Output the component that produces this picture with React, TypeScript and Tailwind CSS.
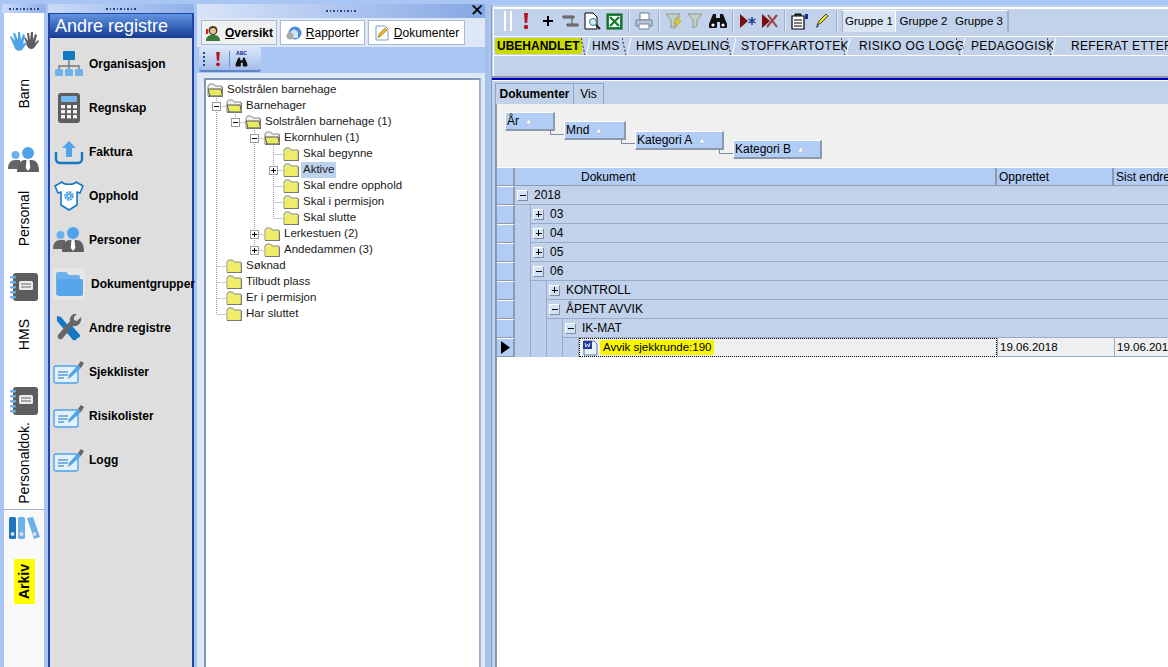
import React from "react";

const Org = () => (
  <svg width="30" height="28" viewBox="0 0 30 28">
    <rect x="9" y="1" width="12" height="9" rx="1" fill="#1578c2" />
    <path d="M15 10v6M5 20v-4h20v4M15 16v4" stroke="#777" strokeWidth="1.4" fill="none" />
    <rect x="1" y="19" width="8" height="7" rx="1.5" fill="#6db1ea" />
    <rect x="11" y="19" width="8" height="7" rx="1.5" fill="#6db1ea" />
    <rect x="21" y="19" width="8" height="7" rx="1.5" fill="#6db1ea" />
  </svg>
);
const Calc = () => (
  <svg width="24" height="32" viewBox="0 0 24 32">
    <rect x="1" y="1" width="22" height="30" rx="3" fill="#5d5d5d" />
    <rect x="4" y="4" width="16" height="6" rx="1" fill="#78b8ee" />
    {[13, 18, 23].map((y) =>
      [4, 10, 16].map((x) => <rect key={`${x}${y}`} x={x} y={y} width="4" height="3.4" fill="#f2f2f2" />)
    )}
  </svg>
);
const Upload = () => (
  <svg width="30" height="26" viewBox="0 0 30 26">
    <path d="M2 13v7a4 4 0 0 0 4 4h18a4 4 0 0 0 4-4v-7" fill="none" stroke="#1578c2" strokeWidth="2.4" />
    <path d="M15 2l7 7h-4v9h-6V9H8z" fill="#4ea3ea" />
  </svg>
);
const Body = () => (
  <svg width="30" height="30" viewBox="0 0 30 30">
    <path d="M8 1c2 3 12 3 14 0l7 4-3 7-3-1v13l-8 5-8-5V11l-3 1-3-7z" fill="#fff" stroke="#1578c2" strokeWidth="1.6" strokeLinejoin="round" />
    <circle cx="15" cy="15" r="3.6" fill="none" stroke="#4ea3ea" strokeWidth="2.6" strokeDasharray="2 .8" />
    <circle cx="15" cy="15" r="2.4" fill="#4ea3ea" />
    <circle cx="15" cy="15" r="1.1" fill="#fff" />
  </svg>
);
const People = () => (
  <svg width="32" height="26" viewBox="0 0 32 26">
    <circle cx="7.5" cy="8" r="4" fill="#6db1ea" />
    <path d="M0 22c0-6 3-9 7-9h5v9z" fill="#666" />
    <circle cx="20" cy="6" r="6" fill="#4ea3ea" />
    <path d="M9 25c0-9 4-12 8-12h6c5 0 8 3 8 12z" fill="#5f5f5f" />
    <path d="M18.5 13h3l.8 8-2.3 3-2.3-3z" fill="#fff" />
  </svg>
);
const BlueFolder = () => (
  <div className="w-[32px] h-[32px] bg-[#e6e6e6] flex items-center justify-center">
    <svg width="30" height="26" viewBox="0 0 30 26">
      <path d="M2 24V3a2 2 0 0 1 2-2h8l3 3h9a2 2 0 0 1 2 2v3H8v15z" fill="#6db1ea" />
      <rect x="3" y="8" width="26" height="17" rx="2" fill="#55a6ea" />
    </svg>
  </div>
);
const Tools = () => (
  <svg width="30" height="28" viewBox="0 0 30 28">
    <path d="M3 2l4 1 16 19a3 3 0 0 1-4 4L3 7z" fill="#1578c2" />
    <path d="M27 3l-4 4-3-1 0-3 3-3c-4-1-8 2-7 7L4 21a3 3 0 0 0 4 4L19 12c5 1 9-3 8-9z" fill="#666" />
    <path d="M14 15l9 9a2.5 2.5 0 0 0 3-3l-8-9z" fill="#1578c2" />
  </svg>
);
const Form = () => (
  <svg width="32" height="24" viewBox="0 0 32 24">
    <rect x="1" y="6" width="24" height="17" rx="2" fill="#e4f1fc" stroke="#4ea3ea" strokeWidth="1.4" />
    <path d="M5 12h10M5 15h10M5 18h6" stroke="#1578c2" strokeWidth="1.2" />
    <path d="M15 19l1-4 9-10 3 3-10 9z" fill="#4ea3ea" />
    <path d="M25 5l3-4 3 2-3 5z" fill="#666" />
  </svg>
);
const Notebook = () => (
  <svg width="30" height="30" viewBox="0 0 30 30">
    <rect x="4" y="1" width="25" height="28" rx="3" fill="#5d5d5d" />
    <rect x="10" y="9" width="14" height="9" rx="1.5" fill="#ececec" />
    <path d="M12 12h10M12 15h10" stroke="#666" />
    {[5, 10, 15, 20, 25].map((y) => <rect key={y} x="1" y={y - 1} width="6" height="2.6" rx="1.3" fill="#6db1ea" />)}
  </svg>
);
const Hands = () => (
  <svg width="32" height="24" viewBox="0 0 32 24">
    <path d="M19 15l-3-6 1-1 3 4-1-8h2l1 7 1-8h2l0 8 2-6 2 1-2 8 3-3 1 1-5 7c-3 2-6 1-8-4z" fill="#5d5d5d" />
    <path d="M2 8l1-1 4 5-2-8h2l3 7 0-8h2l1 8 2-6 2 1-2 9 3-2 1 1-5 7c-4 2-7 0-8-4z" fill="#4ea3ea" />
  </svg>
);
const Binders = () => (
  <svg width="32" height="24" viewBox="0 0 32 24">
    <rect x="1" y="1" width="7" height="22" rx="1.5" fill="#1f75bd" />
    <rect x="10" y="1" width="7" height="22" rx="1.5" fill="#6db1ea" />
    <path d="M19 2l6-1 7 20-6 2z" fill="#6db1ea" />
    <circle cx="4.5" cy="18" r="2" fill="#dde" />
    <circle cx="13.5" cy="18" r="2" fill="#dde" />
    <circle cx="26.5" cy="18" r="2" fill="#dde" />
  </svg>
);

const Folder = ({ open }: { open?: boolean }) => (
  <svg width="16" height="14" viewBox="0 0 16 14" className="flex-none">
    <path d="M1 13V3l1.5-2h4L8 3h7v10z" fill={open ? "#f0f0f0" : "#ecec8a"} stroke="#8a8a7a" />
    {open ? (
      <path d="M3 13L1 6h13l1.5 7z" fill="#eaea60" stroke="#555" />
    ) : (
      <rect x="1.5" y="4" width="13" height="9" fill="#eded6a" />
    )}
    <path d="M1 13.5h15M15.5 4v10" stroke="#777" />
  </svg>
);

type Row = { d: number; t: string; open?: boolean; exp?: "+" | "-"; g?: number[]; last?: boolean; sel?: boolean };
const treeRows: Row[] = [
  { d: 0, t: "Solstrålen barnehage", open: true },
  { d: 1, t: "Barnehager", open: true, exp: "-" },
  { d: 2, t: "Solstrålen barnehage (1)", open: true, exp: "-", g: [1], last: true },
  { d: 3, t: "Ekornhulen (1)", open: true, exp: "-", g: [1] },
  { d: 4, t: "Skal begynne", g: [1, 3] },
  { d: 4, t: "Aktive", exp: "+", g: [1, 3], sel: true },
  { d: 4, t: "Skal endre opphold", g: [1, 3] },
  { d: 4, t: "Skal i permisjon", g: [1, 3] },
  { d: 4, t: "Skal slutte", g: [1, 3], last: true },
  { d: 3, t: "Lerkestuen (2)", exp: "+", g: [1] },
  { d: 3, t: "Andedammen (3)", exp: "+", g: [1], last: true },
  { d: 1, t: "Søknad" },
  { d: 1, t: "Tilbudt plass" },
  { d: 1, t: "Er i permisjon" },
  { d: 1, t: "Har sluttet", last: true },
];

const TreeLines = ({ r }: { r: Row }) => {
  if (r.d === 0) return <div className="w-[1px] flex-none" />;
  const w = r.d * 19 + 1;
  const col = (c: number) => (c - 1) * 19 + 10.5;
  const x = col(r.d);
  return (
    <svg width={w} height="16" className="flex-none">
      <g stroke="#999" strokeDasharray="1 1" fill="none">
        {(r.g ?? []).map((c) => <path key={c} d={`M${col(c)} 0V16`} />)}
        <path d={`M${x} 0V${r.last ? 8 : 16}`} />
        <path d={`M${x} 8.5H${w}`} />
      </g>
      {r.exp && (
        <g>
          <rect x={x - 4} y="4.5" width="8" height="8" fill="#fff" stroke="#9a9a9a" />
          <path d={`M${x - 2.5} 8.5h5`} stroke="#000" />
          {r.exp === "+" && <path d={`M${x} 6v5`} stroke="#000" />}
        </g>
      )}
    </svg>
  );
};

const Grip = ({ cls = "" }: { cls?: string }) => (
  <div className={`flex justify-center gap-[2px] ${cls}`}>
    {[0, 1, 2, 3, 4, 5, 6, 7, 8].map((i) => <span key={i} className="w-[1.5px] h-[2px] bg-[#26408a]" />)}
  </div>
);

const Bang = ({ s = 18 }: { s?: number }) => (
  <svg width="12" height={s} viewBox="0 0 12 18">
    <path d="M4 1h4l-.8 10H4.8z" fill="#b3131f" />
    <circle cx="6" cy="15" r="2.2" fill="#b3131f" />
  </svg>
);
const Binoc = () => (
  <svg width="20" height="16" viewBox="0 0 20 16">
    <path d="M5 1h3v4h4V1h3l4 10v3a1 1 0 0 1-1 1h-5a1 1 0 0 1-1-1V9H9v5a1 1 0 0 1-1 1H2a1 1 0 0 1-1-1v-3z" fill="#111" />
    <circle cx="5" cy="12" r="1.6" fill="#fff" />
    <circle cx="15" cy="12" r="1.6" fill="#fff" />
  </svg>
);
const Funnel = ({ bolt }: { bolt?: boolean }) => (
  <svg width="18" height="18" viewBox="0 0 18 18">
    <path d="M1 2h14l-5 6v6l-4 2V8z" fill="#c3d0c8" stroke="#8a9a90" />
    {bolt && <path d="M13 5l-4 6h3l-3 6 7-8h-3l2-4z" fill="#f2d21f" stroke="#8a7a10" strokeWidth=".4" />}
  </svg>
);

const Slot = ({ children }: { children?: React.ReactNode }) => (
  <div className="w-[22px] h-[22px] flex-none flex items-center justify-center">{children}</div>
);
const Sep = () => (
  <div className="w-[8px] h-[22px] flex-none flex justify-center">
    <div className="w-[2px] h-full bg-[#dfe8f5] border-l border-[#9fb0c8]" />
  </div>
);

const Tri = () => <span className="text-white text-[9px] leading-none" style={{ WebkitTextStroke: "0.5px #9db2d4" }}>▲</span>;

const Box = ({ t, w, mt }: { t: string; w: string; mt: string }) => (
  <div className={`${w} ${mt} h-[19px] flex-none bg-[#b2cdf5] border-t border-l border-white border-r-2 border-b-2 border-r-[#8d99ad] border-b-[#8d99ad] flex items-center gap-[5px] pl-[1px] text-[12px] leading-none text-black`}>
    {t} <Tri />
  </div>
);
const Conn = ({ mt, w = "w-[14px]" }: { mt: string; w?: string }) => (
  <div className={`${w} ${mt} -ml-[5px] h-[5px] flex-none border-l border-b border-[#7e8ca6]`} />
);

const Exp = ({ k }: { k: "+" | "-" }) => (
  <div className="w-[11px] h-[11px] flex-none bg-[#d4e2f8] border-t border-l border-white border-r border-b border-r-[#7e8ca6] border-b-[#7e8ca6] flex items-center justify-center relative">
    <span className="w-[6px] h-[1px] bg-black" />
    {k === "+" && <span className="absolute w-[1px] h-[6px] bg-black" />}
  </div>
);

const SelCell = ({ active }: { active?: boolean }) => (
  <div className="w-[18px] h-[19px] flex-none bg-[#b2cdf5] border-t border-white border-r-2 border-r-[#8d99ad] border-b border-b-[#8d99ad] flex items-center justify-center">
    {active && (
      <svg width="9" height="13" viewBox="0 0 9 13"><path d="M0 0l9 6.5L0 13z" fill="#000" /></svg>
    )}
  </div>
);

const gridRows: { lv: number; t: string; k: "+" | "-" }[] = [
  { lv: 0, t: "2018", k: "-" },
  { lv: 1, t: "03", k: "+" },
  { lv: 1, t: "04", k: "+" },
  { lv: 1, t: "05", k: "+" },
  { lv: 1, t: "06", k: "-" },
  { lv: 2, t: "KONTROLL", k: "+" },
  { lv: 2, t: "ÅPENT AVVIK", k: "-" },
  { lv: 3, t: "IK-MAT", k: "-" },
];

const Indent = ({ n }: { n: number }) => (
  <>
    {Array.from({ length: n }).map((_, i) => (
      <div key={i} className="w-[16px] h-full flex-none bg-[#bcd0ee] border-r border-[#98abc8]" />
    ))}
  </>
);

const TabSep = () => (
  <svg width="10" height="20" className="flex-none">
    <path d="M0 1l4 17" stroke="#222" strokeDasharray="2 2" />
    <path d="M5 19l4-18" stroke="#fff" />
  </svg>
);

const RailLabel = ({ t }: { t: string }) => (
  <span className="[writing-mode:vertical-rl] rotate-180 text-[14px] leading-none text-black">{t}</span>
);

const navItems: { t: string; icon: React.ReactNode; shift?: boolean }[] = [
  { t: "Organisasjon", icon: <Org /> },
  { t: "Regnskap", icon: <Calc /> },
  { t: "Faktura", icon: <Upload /> },
  { t: "Opphold", icon: <Body /> },
  { t: "Personer", icon: <People /> },
  { t: "Dokumentgrupper", icon: <BlueFolder />, shift: true },
  { t: "Andre registre", icon: <Tools /> },
  { t: "Sjekklister", icon: <Form /> },
  { t: "Risikolister", icon: <Form /> },
  { t: "Logg", icon: <Form /> },
];

export default function App() {
  return (
    <div className="w-[1168px] h-[667px] overflow-hidden flex bg-[#a9c5f3] pt-[4px] font-['Liberation_Sans',Arial,sans-serif] text-black">
      {/* Rail */}
      <div className="w-[44px] ml-[2px] flex-none flex flex-col">
        <div className="h-[9px] flex-none bg-gradient-to-r from-[#c9dbf8] to-[#8fb0e8] rounded-t-[3px] flex items-center"><Grip cls="w-full" /></div>
        <div className="flex-1 ml-[2px] mr-[2px] bg-white flex flex-col items-center">
          <div className="h-[16px]" />
          <Hands />
          <div className="h-[26px]" />
          <RailLabel t="Barn" />
          <div className="h-[38px]" />
          <People />
          <div className="h-[18px]" />
          <RailLabel t="Personal" />
          <div className="h-[26px]" />
          <Notebook />
          <div className="h-[17px]" />
          <RailLabel t="HMS" />
          <div className="h-[36px]" />
          <Notebook />
          <div className="h-[6px]" />
          <RailLabel t="Personaldok." />
          <div className="h-[5px]" />
          <div className="w-full flex-1 bg-[#f9f9f9] border-t border-[#9fb5d8] flex flex-col items-center">
            <div className="h-[6px]" />
            <Binders />
            <div className="h-[19px]" />
            <div className="bg-[#ffff00] w-[21px] h-[45px] flex items-center justify-center">
              <span className="[writing-mode:vertical-rl] rotate-180 text-[14px] font-bold leading-none">Arkiv</span>
            </div>
          </div>
        </div>
      </div>

      {/* Nav */}
      <div className="w-[146px] ml-[2px] flex-none flex flex-col">
        <div className="h-[9px] flex-none bg-gradient-to-r from-[#c9dbf8] to-[#8fb0e8] rounded-t-[3px] flex items-center"><Grip cls="w-full" /></div>
        <div className="flex-1 border-x-2 border-t border-[#1f45a8] bg-[#dedede] flex flex-col">
          <div className="h-[24px] flex-none bg-gradient-to-b from-[#6395e2] to-[#143a92] text-white text-[18px] leading-[24px] pl-[5px] whitespace-nowrap">Andre registre</div>
          <div className="h-[4px]" />
          {navItems.map((n) => (
            <div key={n.t} className="h-[44px] flex-none flex items-center pl-[3px]">
              <div className="w-[32px] flex-none flex justify-center">{n.icon}</div>
              <span className={`${n.shift ? "ml-[6px]" : "ml-[4px]"} text-[12px] font-bold whitespace-nowrap`}>{n.t}</span>
            </div>
          ))}
        </div>
      </div>

      {/* Tree panel */}
      <div className="w-[292px] ml-[3px] flex-none flex flex-col border-r-4 border-[#a9c0e6]">
        <div className="h-[14px] flex-none bg-gradient-to-r from-[#d8e4f8] to-[#86a7e4] flex items-center relative">
          <Grip cls="w-full" />
          <span className="absolute right-[1px] top-[-2px] text-[17px] leading-none">✕</span>
        </div>
        <div className="flex-1 bg-[#dde7f6] flex flex-col min-h-0">
          <div className="h-[25px] mt-[2px] flex-none flex gap-[3px] pl-[4px] items-stretch text-[12px]">
            <div className="w-[76px] bg-[#f0f0f0] border border-[#a8bcd8] flex items-center justify-center gap-[4px] font-bold">
              <svg width="16" height="16" viewBox="0 0 16 16"><circle cx="8" cy="5.5" r="4.5" fill="#4a3a20" /><circle cx="8" cy="6" r="3" fill="#e8c090" /><path d="M1 16c0-5 3-6 7-6s7 1 7 6z" fill="#3a7a3a" /><path d="M2 4v5" stroke="#c22" strokeWidth="2" /></svg>
              <span><u>O</u>versikt</span>
            </div>
            <div className="w-[85px] bg-white border border-[#a8bcd8] flex items-center justify-center gap-[4px]">
              <svg width="16" height="16" viewBox="0 0 16 16"><circle cx="9" cy="8" r="6.5" fill="#4b8fd8" /><path d="M4 7l4-3 4 3v6H4z" fill="#cfe3f8" /><circle cx="4" cy="11" r="3.5" fill="#aaa" /></svg>
              <span><u>R</u>apporter</span>
            </div>
            <div className="w-[97px] bg-white border border-[#a8bcd8] flex items-center justify-center gap-[4px]">
              <svg width="16" height="16" viewBox="0 0 16 16"><path d="M2 1h9l3 3v11H2z" fill="#fff" stroke="#7f9fc8" /><path d="M4 13l1-4 6-6 2 2-6 6z" fill="#e6b422" stroke="#8a5a10" strokeWidth=".5" /></svg>
              <span><u>D</u>okumenter</span>
            </div>
          </div>
          <div className="h-[26px] mt-[2px] flex-none bg-[#aac6f5] pl-[2px]">
            <div className="w-[62px] h-[25px] rounded-[3px] bg-gradient-to-b from-[#dbe7fa] to-[#a3bde9] border-b-2 border-[#5f83c4] flex items-center pl-[4px]">
              <div className="flex flex-col gap-[2px] w-[2px] flex-none">
                {[0, 1, 2, 3].map((i) => <span key={i} className="w-[2px] h-[2px] bg-[#26408a]" />)}
              </div>
              <div className="ml-[7px] flex-none"><Bang s={16} /></div>
              <div className="w-[1px] h-[16px] bg-[#6f8fc8] ml-[5px] flex-none" />
              <div className="ml-[5px] flex flex-col items-center flex-none leading-none">
                <span className="text-[6px] font-bold text-[#1a2f9a] leading-[6px] font-['Liberation_Mono']">ABC</span>
                <svg width="13" height="10" viewBox="0 0 20 16" preserveAspectRatio="none"><path d="M5 1h3v4h4V1h3l4 10v3a1 1 0 0 1-1 1h-5a1 1 0 0 1-1-1V9H9v5a1 1 0 0 1-1 1H2a1 1 0 0 1-1-1v-3z" fill="#111" /></svg>
              </div>
            </div>
          </div>
          <div className="flex-1 mt-[5px] ml-[7px] mr-[4px] bg-white border-2 border-b-0 border-[#7f98b8] border-r-[#9fb2cc] pt-[2px] overflow-hidden">
            {treeRows.map((r, i) => (
              <div key={i} className="h-[16px] flex items-center">
                <TreeLines r={r} />
                <Folder open={r.open} />
                <span className={`ml-[2px] px-[2px] h-[16px] leading-[15px] text-[11.5px] text-[#1a1a1a] whitespace-nowrap ${r.sel ? "bg-[#bdd2ec]" : ""}`}>{r.t}</span>
              </div>
            ))}
          </div>
        </div>
      </div>

      {/* Right panel */}
      <div className="flex-1 min-w-0 ml-[2px] bg-[#c1d2ea] flex flex-col overflow-hidden border-l border-[#7f9bcc] mt-[1px]">
        <div className="ml-[1px] border-l border-t-2 border-white mt-[2px] pt-[1px] flex-none h-[69px] flex flex-col">
          <div className="h-[22px] flex-none flex items-center pl-[10px]">
            <div className="w-[8px] h-[20px] flex-none border-l-2 border-r-2 border-white mr-[3px]" />
            <Slot><Bang /></Slot>
            <Slot><svg width="12" height="12" viewBox="0 0 12 12"><path d="M6 1v10M1 6h10" stroke="#000" strokeWidth="2" /></svg></Slot>
            <Slot><svg width="17" height="14" viewBox="0 0 17 14"><path d="M1 2h11v2H1zM5 10h11v2H5zM10 4v7" fill="#888" stroke="#555" /></svg></Slot>
            <Slot><svg width="17" height="18" viewBox="0 0 17 18"><path d="M1 1h8l4 4v12H1z" fill="#fff" stroke="#000" /><circle cx="9" cy="10" r="3.5" fill="#d8ecf8" stroke="#2a7a8a" /><path d="M12 13l4 4" stroke="#222" strokeWidth="2" /></svg></Slot>
            <Slot><svg width="17" height="17" viewBox="0 0 17 17"><rect x="1" y="1" width="15" height="15" fill="#1a8a3a" stroke="#0a5a20" /><rect x="3" y="3" width="11" height="11" fill="#fff" /><path d="M4 4l9 9M13 4l-9 9" stroke="#1a7a30" strokeWidth="2.4" /></svg></Slot>
            <Sep />
            <Slot><svg width="18" height="18" viewBox="0 0 18 18"><path d="M5 1h9v7H5z" fill="#fff" stroke="#6f8296" /><path d="M1 8h16v6H1z" fill="#b9c6d4" stroke="#6f8296" /><path d="M4 12h10v5H4z" fill="#fff" stroke="#6f8296" /></svg></Slot>
            <Sep />
            <Slot><Funnel bolt /></Slot>
            <Slot><Funnel /></Slot>
            <Slot><Binoc /></Slot>
            <Sep />
            <Slot><svg width="18" height="14" viewBox="0 0 18 14"><path d="M1 0l8 7-8 7z" fill="#7a0f0f" /><path d="M13 3v8M9.5 5l7 4M16.5 5l-7 4" stroke="#1a2f9a" strokeWidth="1.4" /></svg></Slot>
            <Slot><svg width="18" height="14" viewBox="0 0 18 14"><path d="M1 0l8 7-8 7z" fill="#7a0f0f" /><path d="M6 13L16 1M7 1l9 12" stroke="#a04040" strokeWidth="2" /></svg></Slot>
            <Sep />
            <Slot><svg width="18" height="17" viewBox="0 0 18 17"><path d="M1 3h12v13H1z" fill="#fff" stroke="#000" strokeWidth="1.2" /><path d="M3 7h8M3 10h8M3 13h8" stroke="#000" /><path d="M4 3V1h6v2" fill="#333" stroke="#000" /><path d="M14 1h3v5h-3z" fill="#1a2f9a" /></svg></Slot>
            <Slot><svg width="14" height="16" viewBox="0 0 14 16"><path d="M2 12l2-4 7-7 2 2-7 7z" fill="#f2e020" stroke="#222" strokeWidth=".8" /><path d="M1 15l1-3 2 1z" fill="#222" /></svg></Slot>
            <Sep />
            <div className="ml-[1px] flex border-t border-white border-r-2 border-r-[#9fb0c8] text-[11.5px] h-[22px] flex-none">
              <div className="w-[54px] bg-[#dbe6f5] border-l border-[#9fb0c8] border-r border-r-white flex items-center justify-center">Gruppe 1</div>
              <div className="w-[55px] flex items-center justify-center">Gruppe 2</div>
              <div className="w-[56px] flex items-center justify-center">Gruppe 3</div>
            </div>
          </div>
          <div className="h-[20px] mt-[4px] flex-none flex text-[12px] tracking-[0.35px] leading-[18px] border-y border-white whitespace-nowrap -ml-[1px]">
            <div className="w-[88px] flex-none pl-[2px]">
              <span className="bg-[#cbdb00] rounded-[3px] font-bold tracking-normal px-[2px] py-[1px]">UBEHANDLET</span>
            </div>
            <TabSep />
            <div className="w-[31px] flex-none pl-[1px]">HMS</div>
            <TabSep />
            <div className="w-[95px] flex-none pl-[4px]">HMS AVDELING</div>
            <TabSep />
            <div className="w-[104px] flex-none pl-[4px]">STOFFKARTOTEK</div>
            <TabSep />
            <div className="w-[105px] flex-none pl-[8px]">RISIKO OG LOGG</div>
            <TabSep />
            <div className="w-[81px] flex-none pl-[5px]">PEDAGOGISK</div>
            <TabSep />
            <div className="flex-none pl-[14px]">REFERAT ETTER F</div>
          </div>
        </div>
        <div className="h-[2px] flex-none bg-[#8d99ad]" />
        <div className="h-[2px] flex-none bg-[#0000c0]" />
        <div className="h-[1px] flex-none bg-white" />
        <div className="h-[2px] flex-none" />
        <div className="h-[21px] flex-none flex pl-[3px] text-[12px]">
          <div className="w-[79px] border-t border-x border-[#8fa3c4] font-bold flex items-center justify-center">Dokumenter</div>
          <div className="w-[30px] border-t border-r border-[#8fa3c4] flex items-center justify-center">Vis</div>
        </div>
        <div className="flex-1 ml-[3px] border-l-2 border-[#8d99ad] bg-white flex flex-col min-h-0 overflow-hidden">
          <div className="h-[63px] flex-none bg-[#f0f0f0] flex items-start pl-[8px]">
            <Box t="År" w="w-[50px]" mt="mt-[8px]" />
            <Conn mt="mt-[26px]" />
            <Box t="Mnd" w="w-[62px]" mt="mt-[17px]" />
            <Conn mt="mt-[35px]" w="w-[14px]" />
            <Box t="Kategori A" w="w-[89px]" mt="mt-[27px]" />
            <Conn mt="mt-[45px]" w="w-[14px]" />
            <Box t="Kategori B" w="w-[89px]" mt="mt-[36px]" />
          </div>
          <div className="h-[19px] flex-none flex text-[12px] leading-[18px] bg-[#b2cdf5] border-t border-white border-b border-b-[#8d99ad]">
            <div className="w-[18px] flex-none border-r-2 border-[#8d99ad]" />
            <div className="w-[482px] flex-none border-r-2 border-[#8d99ad] pl-[66px]">Dokument</div>
            <div className="w-[117px] flex-none border-r-2 border-[#8d99ad] pl-[2px]">Opprettet</div>
            <div className="flex-1 pl-[2px] whitespace-nowrap">Sist endret</div>
          </div>
          {gridRows.map((r) => (
            <div key={r.t} className="h-[19px] flex-none flex bg-[#c1d2ea]">
              <SelCell />
              <Indent n={r.lv} />
              <div className="flex-1 flex items-center border-b border-[#98abc8] pl-[2px] gap-[6px] text-[12px]">
                <Exp k={r.k} />
                <span>{r.t}</span>
              </div>
            </div>
          ))}
          <div className="h-[19px] flex-none flex">
            <SelCell active />
            <Indent n={4} />
            <div className="w-[418px] flex-none flex items-center bg-[#f0f0f0] border border-dotted border-black pl-[2px] text-[11.5px]">
              <svg width="16" height="16" viewBox="0 0 16 16" className="flex-none"><path d="M2 1h10l3 3v11H2z" fill="#e8f0fa" stroke="#5a7aa8" /><rect x="1" y="1" width="9" height="8" fill="#23389a" /><path d="M3 3l1 4 1.500-3 1.500 3 1-4" stroke="#fff" fill="none" strokeWidth=".8" /></svg>
              <span className="ml-[2px] bg-[#f5f500] px-[3px] h-[15px] leading-[15px] rounded-[2px]">Avvik sjekkrunde:190</span>
            </div>
            <div className="w-[117px] flex-none bg-[#f0f0f0] border-b border-l border-[#98abc8] pl-[2px] text-[11.5px] leading-[18px]">19.06.2018</div>
            <div className="flex-1 bg-[#f0f0f0] border-b border-l border-[#98abc8] pl-[2px] text-[11.5px] leading-[18px] whitespace-nowrap overflow-hidden">19.06.2018</div>
          </div>
        </div>
      </div>
    </div>
  );
}
